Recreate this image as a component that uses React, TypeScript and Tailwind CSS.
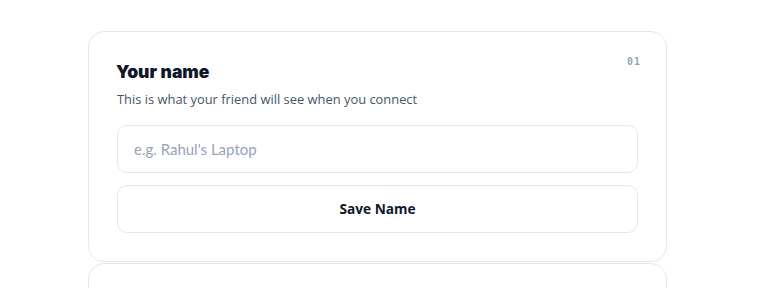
import React from "react";

export default function App() {
  return (
    <div className="min-h-[288px] w-full bg-white font-['Open_Sans',sans-serif]">
      <div className="w-[755px] flex flex-col items-center pt-[31px] gap-[1px]">
        <div className="relative w-[579px] rounded-2xl border border-[#e2e8f0] bg-white px-7 pt-[28px] pb-[28px]">
          <span className="absolute right-[25px] top-[22px] font-['DejaVu_Sans_Mono',monospace] text-[10px] font-bold tracking-[0.1em] text-[#94a3b8]">
            01
          </span>
          <h2 className="-ml-[1px] font-['Inter',sans-serif] text-[17.5px] leading-[24px] font-black text-[#0f172a]">Your name</h2>
          <p className="mt-[6px] text-[12.9px] leading-[18px] text-[#475569]">
            This is what your friend will see when you connect
          </p>
          <input
            className="mt-[17px] block h-[48px] w-full rounded-[10px] border border-[#e2e8f0] px-4 font-['Lato',sans-serif] text-[15px] text-[#0f172a] placeholder:text-[#94a3b8] outline-none"
            placeholder="e.g. Rahul's Laptop"
          />
          <button className="mt-[12px] flex h-[48px] w-full items-center justify-center rounded-[10px] border border-[#e2e8f0] bg-white text-[13.7px] font-bold text-[#0f172a]">
            Save Name
          </button>
        </div>
        <div className="h-[60px] w-[579px] rounded-2xl border border-[#e2e8f0] bg-white" />
      </div>
    </div>
  );
}
